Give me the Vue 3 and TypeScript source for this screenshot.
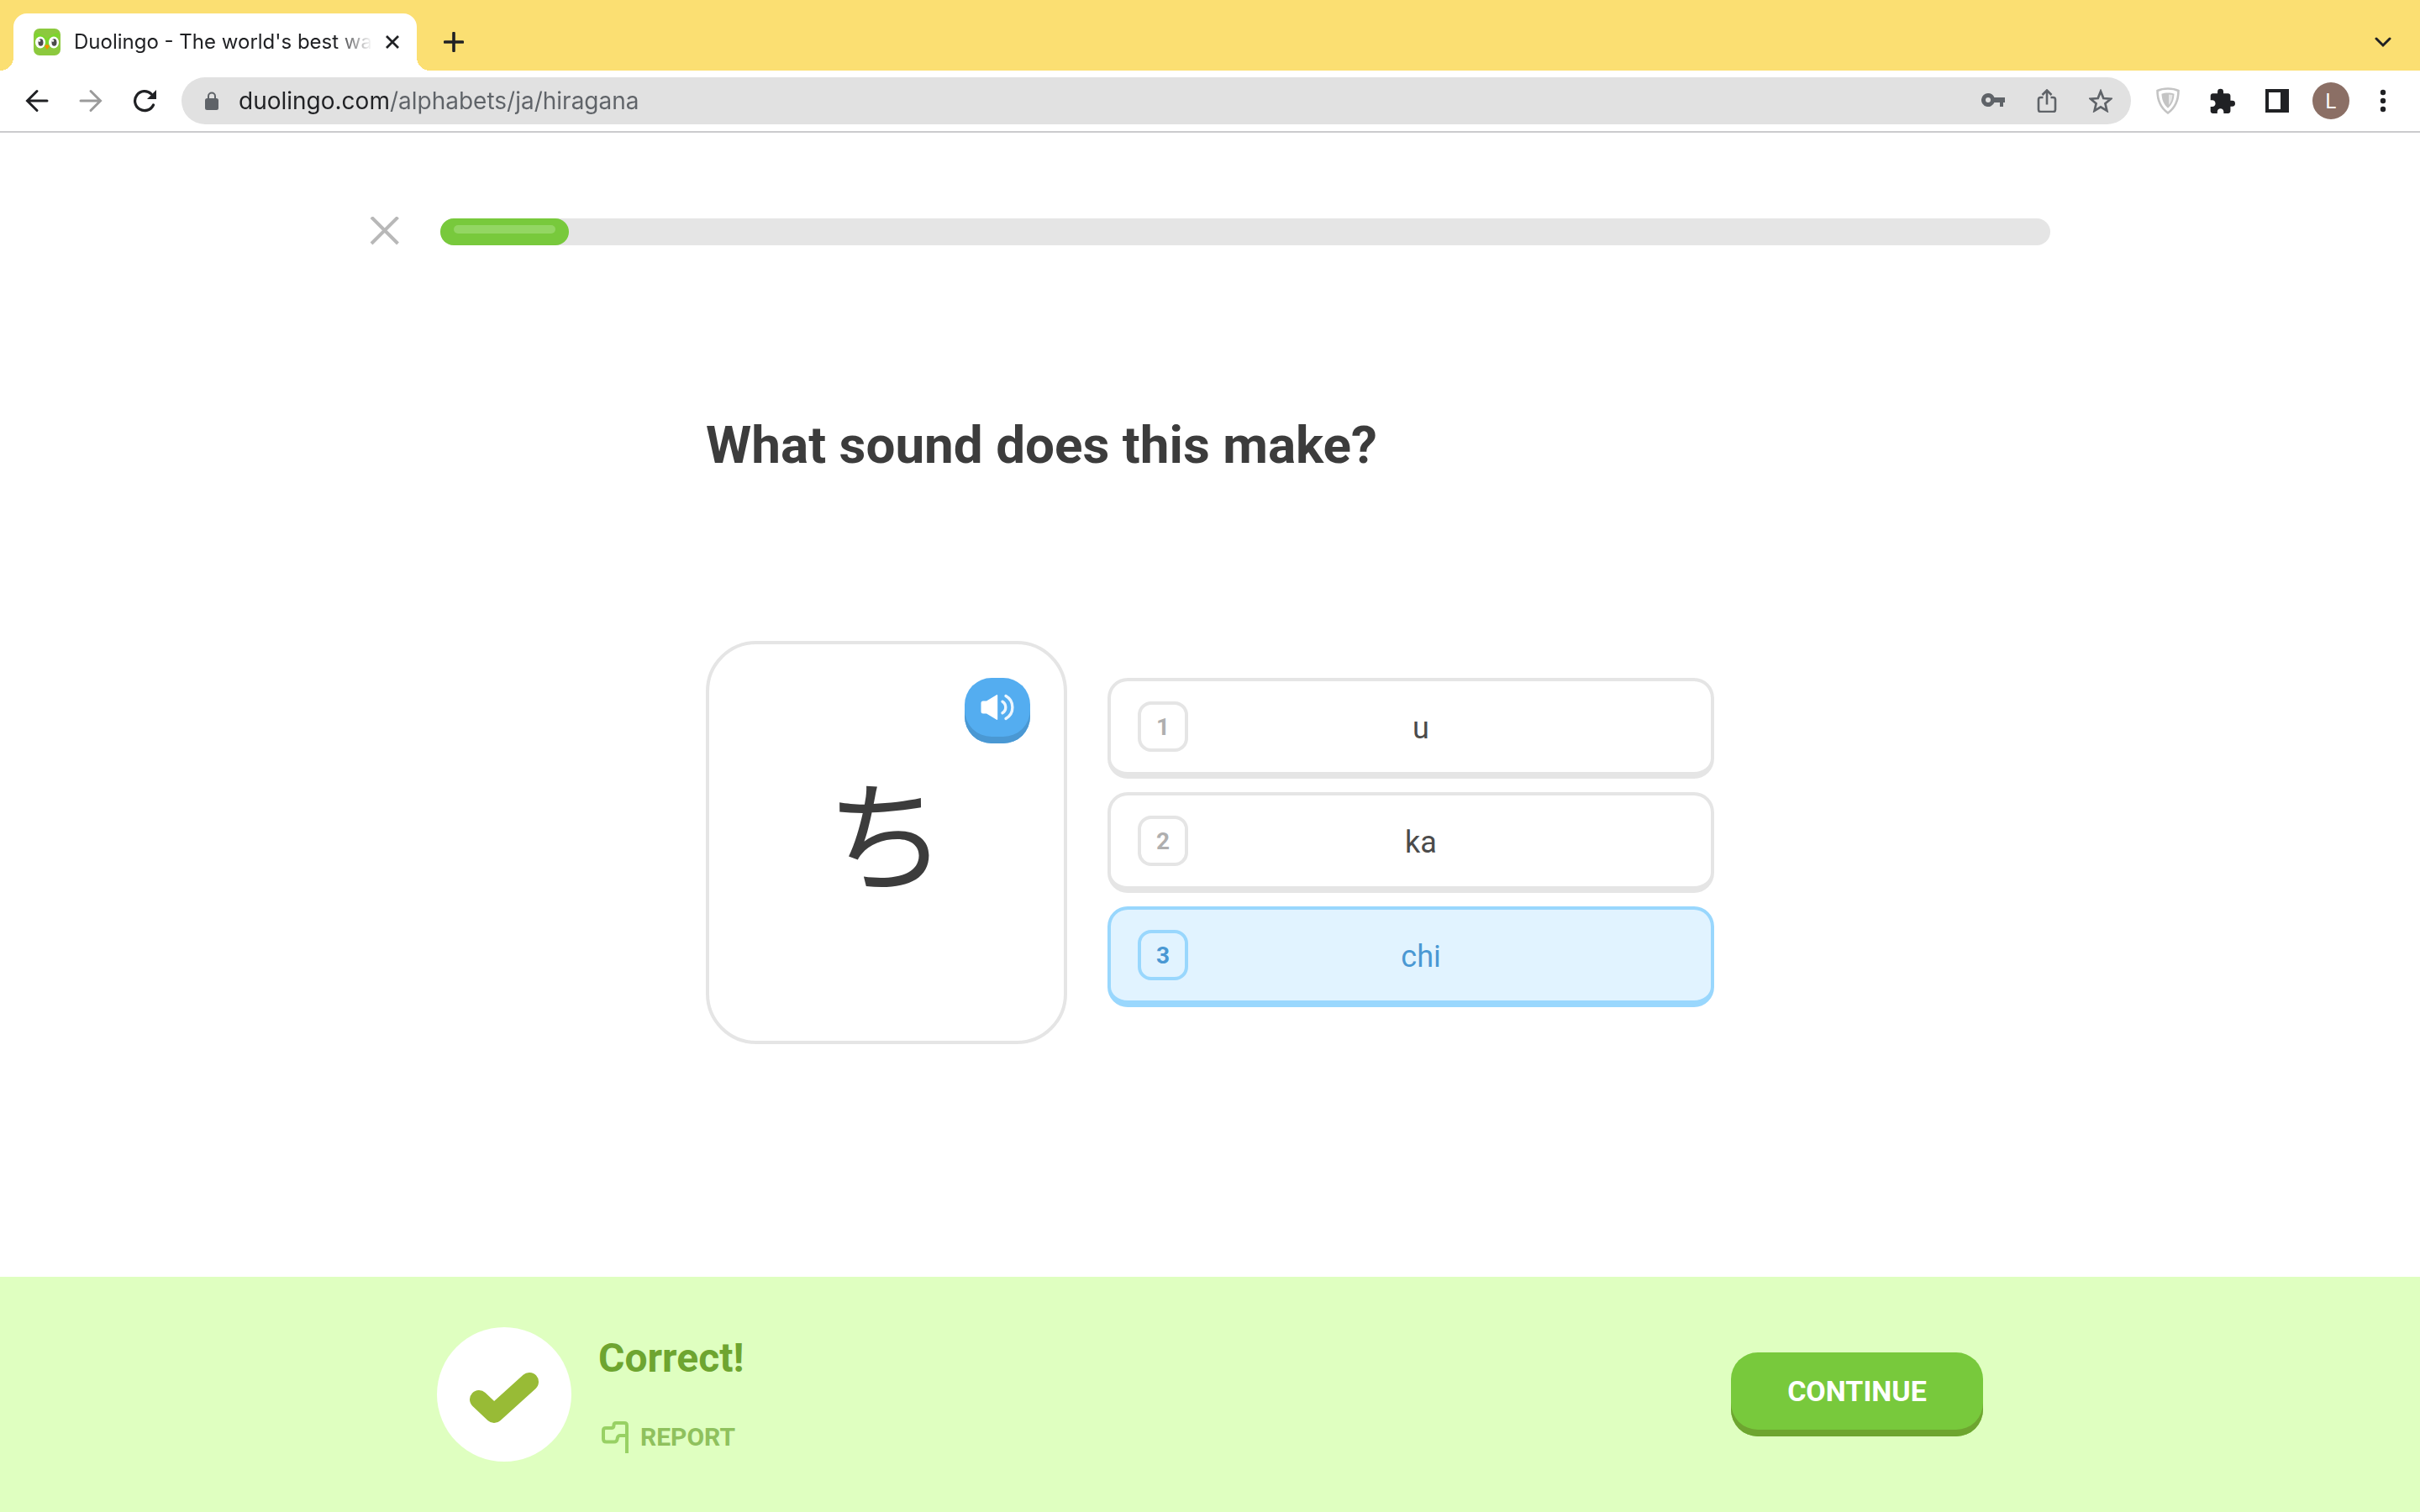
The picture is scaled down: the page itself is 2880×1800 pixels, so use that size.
<script setup lang="ts">
import { ref } from 'vue'

interface Choice {
  key: number
  sound: string
}

const choices: Choice[] = [
  { key: 1, sound: 'u' },
  { key: 2, sound: 'ka' },
  { key: 3, sound: 'chi' },
]
const selected = ref<number>(3)
const progress = ref<number>(8)
const address = ref<string>('duolingo.com/alphabets/ja/hiragana')
</script>

<template>
  <div class="page">
    <header class="browser">
      <div class="tab-strip">
        <div class="tab">
          <svg class="favicon" viewBox="0 0 32 32" aria-hidden="true">
            <rect width="32" height="32" rx="7" fill="#8cc93e" />
            <path d="M2 5c2 0 9 2 14 7 5-5 12-7 14-7l-1 8v9c-3 3-10 1-13-1-3 2-10 4-13 1v-9z" fill="#7bd62b" />
            <ellipse cx="8" cy="16.500" rx="6" ry="7" fill="#fff" />
            <ellipse cx="24" cy="16.500" rx="6" ry="7" fill="#fff" />
            <ellipse cx="8.500" cy="16.500" rx="3" ry="4.300" fill="#4b4b4b" />
            <ellipse cx="24.500" cy="16.500" rx="3" ry="4.300" fill="#4b4b4b" />
            <circle cx="7" cy="14.500" r="1.200" fill="#fff" />
            <circle cx="23" cy="14.500" r="1.200" fill="#fff" />
            <path d="M13 21q3-4 6 0l-3 4z" fill="#f49000" />
          </svg>
          <span class="tab-title">Duolingo - The world's best wa</span>
          <button class="icon-button" type="button" aria-label="Close tab">
            <svg width="16" height="16" viewBox="0 0 16 16"><path d="M1 1l14 14M15 1L1 15" fill="none" stroke="#202124" stroke-width="2.800" /></svg>
          </button>
        </div>
        <button class="icon-button new-tab" type="button" aria-label="New tab">
          <svg width="24" height="24" viewBox="0 0 24 24"><path d="M12 1.500v21M1.500 12h21" fill="none" stroke="#202124" stroke-width="3.600" stroke-linecap="round" /></svg>
        </button>
        <button class="icon-button tab-search" type="button" aria-label="Search tabs">
          <svg width="20" height="14" viewBox="0 0 20 14"><path d="M2 3l8 8 8-8" fill="none" stroke="#202124" stroke-width="3" stroke-linecap="round" /></svg>
        </button>
      </div>

      <div class="toolbar">
        <nav class="history" aria-label="History">
          <button class="icon-button" type="button" aria-label="Back">
            <svg width="28" height="28" viewBox="0 0 28 28"><path d="M26 14H3M14 2.500L2.500 14 14 25.500" fill="none" stroke="#202124" stroke-width="3" stroke-linecap="round" /></svg>
          </button>
          <button class="icon-button" type="button" aria-label="Forward">
            <svg width="28" height="28" viewBox="0 0 28 28"><path d="M2 14h23M14 2.500L25.500 14 14 25.500" fill="none" stroke="#9b9b9b" stroke-width="3" stroke-linecap="round" /></svg>
          </button>
          <button class="icon-button" type="button" aria-label="Reload">
            <svg width="28" height="28" viewBox="0 0 28 28">
              <path d="M22 5.800A11.500 11.500 0 1 0 24.500 19" fill="none" stroke="#202124" stroke-width="3.200" stroke-linecap="round" />
              <path d="M28 1v11H17z" fill="#202124" />
            </svg>
          </button>
        </nav>

        <div class="omnibox">
          <svg class="lock" width="16" height="22" viewBox="0 0 16 22" aria-hidden="true">
            <rect y="8" width="16" height="14" rx="2.500" fill="#5f6368" />
            <path d="M4 9V5.500a4 4 0 0 1 8 0V9" fill="none" stroke="#5f6368" stroke-width="2" />
          </svg>
          <input v-model="address" class="address" type="text" aria-label="Address" />
          <button class="icon-button" type="button" aria-label="Passwords">
            <svg width="28" height="28" viewBox="0 0 28 28">
              <path fill="#5f6368" fill-rule="evenodd" d="M8 5a8 8 0 1 0 7.400 11H22v5h4v-5h2v-6H15.400A8 8 0 0 0 8 5zm0 5a3 3 0 1 1 0 6 3 3 0 0 1 0-6z" />
            </svg>
          </button>
          <button class="icon-button" type="button" aria-label="Share">
            <svg width="28" height="28" viewBox="0 0 28 28">
              <path d="M9.500 10H6.500a2.500 2.500 0 0 0-2.500 2.500v12a2.500 2.500 0 0 0 2.500 2.500h15a2.500 2.500 0 0 0 2.500-2.500v-12a2.500 2.500 0 0 0-2.500-2.500h-3M14 18.500V2M8.500 7L14 1.500 19.500 7" fill="none" stroke="#5f6368" stroke-width="2.600" />
            </svg>
          </button>
          <button class="icon-button" type="button" aria-label="Bookmark this tab">
            <svg width="28" height="28" viewBox="0 0 28 28">
              <path d="M14 2.800l3.300 8.200 8.700.7-6.600 5.600 2 8.500-7.400-4.500-7.400 4.500 2-8.500L2 11.700l8.700-.7z" fill="none" stroke="#5f6368" stroke-width="2.700" />
            </svg>
          </button>
        </div>

        <div class="extensions">
          <button class="icon-button" type="button" aria-label="Shield extension">
            <svg width="28" height="32" viewBox="0 0 28 32">
              <path d="M14 1.500c5 0 9 .8 12.500 2.500 0 11-3.500 20-12.500 26.500C5 24 1.500 15 1.500 4 5 2.300 9 1.500 14 1.500z" fill="none" stroke="#c4c4c4" stroke-width="2.600" />
              <path d="M14 6.500c3 0 5.500.4 7.500 1.200-.2 7-2.500 12.800-7.500 17C9 20.500 6.700 14.700 6.500 7.700 8.500 6.900 11 6.500 14 6.500z" fill="#c4c4c4" />
              <path d="M15 8.500c1.800 0 3.200.2 4.500.6-.4 5-1.700 9-4.500 12z" fill="#e9e9e9" />
            </svg>
          </button>
          <button class="icon-button" type="button" aria-label="Extensions">
            <svg width="30" height="30" viewBox="1.500 0.500 21.500 21.500">
              <path fill="#202124" d="M20.500 11H19V7c0-1.100-.9-2-2-2h-4V3.500a2.500 2.500 0 0 0-5 0V5H4c-1.100 0-1.990.9-1.990 2v3.800H3.500c1.490 0 2.700 1.210 2.700 2.700s-1.210 2.700-2.700 2.700H2V20c0 1.100.9 2 2 2h3.800v-1.500c0-1.490 1.210-2.700 2.700-2.700 1.490 0 2.700 1.210 2.700 2.700V22H17c1.100 0 2-.9 2-2v-4h1.500a2.500 2.500 0 0 0 0-5z" />
            </svg>
          </button>
          <button class="icon-button" type="button" aria-label="Side panel">
            <svg width="28" height="28" viewBox="0 0 28 28"><path fill="#202124" fill-rule="evenodd" d="M0 0h28v28H0zM4 4v20h14V4z" /></svg>
          </button>
          <button class="avatar" type="button" aria-label="Profile L">L</button>
          <button class="icon-button" type="button" aria-label="Menu">
            <svg width="8" height="28" viewBox="0 0 8 28" fill="#202124"><circle cx="4" cy="4" r="3.200" /><circle cx="4" cy="14" r="3.200" /><circle cx="4" cy="24" r="3.200" /></svg>
          </button>
        </div>
      </div>
    </header>

    <main class="lesson">
      <div class="lesson-top">
        <button class="icon-button" type="button" aria-label="Quit lesson">
          <svg width="36" height="36" viewBox="0 0 36 36"><path d="M2 .500l31.500 31.500M33.500.500L2 32" fill="none" stroke="#b8b8b8" stroke-width="4" /></svg>
        </button>
        <div class="track" role="progressbar" :aria-valuenow="progress" aria-valuemin="0" aria-valuemax="100" aria-label="Lesson progress">
          <div class="fill" :style="{ width: progress + '%' }"><div class="shine"></div></div>
        </div>
      </div>

      <section class="challenge">
        <h1>What sound does this make?</h1>
        <div class="exercise">
          <div class="card">
            <span class="kana" lang="ja">ち</span>
            <button class="speaker" type="button" aria-label="Play sound">
              <svg width="40" height="32" viewBox="0 0 40 32">
                <path d="M3 8.500h4L19 1.200q1.200-.5 1.200.8v28q0 1.300-1.200.8L7 23.500H3Q.500 23.500.500 21V11Q.500 8.500 3 8.500z" fill="#fff" />
                <path d="M26 9.200a8 8 0 0 1 0 13.600M30 2.500a15.500 15.500 0 0 1 0 27" fill="none" stroke="#ecf6fe" stroke-width="3.400" stroke-linecap="round" />
              </svg>
            </button>
          </div>
          <div class="choices" role="radiogroup" aria-label="Answers">
            <label v-for="choice in choices" :key="choice.key" class="choice" :class="{ chosen: selected === choice.key }">
              <input v-model="selected" class="choice-input" type="radio" name="answer" :value="choice.key" />
              <span class="choice-key">{{ choice.key }}</span>
              <span class="choice-sound">{{ choice.sound }}</span>
            </label>
          </div>
        </div>
      </section>
    </main>

    <footer class="result">
      <div class="result-inner">
        <div class="badge">
          <svg width="82" height="60" viewBox="0 0 82 60" aria-hidden="true"><path d="M11 32l18 17 42-38" fill="none" stroke="#98bb36" stroke-width="22" stroke-linecap="round" stroke-linejoin="round" /></svg>
        </div>
        <div class="verdict">
          <h2>Correct!</h2>
          <button class="report" type="button">
            <svg width="32" height="38" viewBox="0 0 32 38" aria-hidden="true">
              <path d="M30 38V5q0-3-3-3H17q-2.500 0-2.500 2.500V5q0 3-3 3H5Q2 8 2 11v10q0 3.500 3.500 3.500H15q3 0 3.500-3l.3-1.500q.7-3 3.200-3h8" fill="none" stroke="#98d164" stroke-width="4" />
            </svg>
            REPORT
          </button>
        </div>
        <button class="continue" type="button">CONTINUE</button>
      </div>
    </footer>
  </div>
</template>

<style>
body {
  margin: 0;
  background: #fff;
}
</style>

<style scoped>
.page {
  display: flex;
  flex-direction: column;
  min-height: 100vh;
  font-family: Roboto, "Liberation Sans", sans-serif;
  color: #3c3c3c;
}
.page * {
  box-sizing: border-box;
}
button {
  margin: 0;
  padding: 0;
  border: 0;
  background: none;
  font: inherit;
  color: inherit;
  cursor: pointer;
}
svg {
  display: block;
  flex: none;
}
.icon-button {
  display: flex;
  flex: none;
}
.browser {
  font-family: Inter, "Liberation Sans", sans-serif;
  color: #202124;
}

/* Tab strip */
.tab-strip {
  display: flex;
  align-items: center;
  height: 84px;
  padding: 16px 34px 0 16px;
  background: #fbdf72;
}
.tab {
  position: relative;
  display: flex;
  align-items: center;
  gap: 16px;
  width: 480px;
  height: 68px;
  padding: 0 24px;
  border-radius: 16px 16px 0 0;
  background: #fff;
}
.tab::before,
.tab::after {
  content: "";
  position: absolute;
  bottom: 0;
  width: 16px;
  height: 16px;
}
.tab::before {
  right: 100%;
  background: radial-gradient(circle at 0 0, transparent 16px, #fff 16px);
}
.tab::after {
  left: 100%;
  background: radial-gradient(circle at 100% 0, transparent 16px, #fff 16px);
}
.favicon {
  width: 32px;
  height: 32px;
}
.tab-title {
  flex: 1;
  font-size: 24px;
  line-height: 32px;
  white-space: nowrap;
  mask-image: linear-gradient(90deg, #000 calc(100% - 44px), transparent);
}
.new-tab {
  margin-left: 32px;
}
.tab-search {
  margin-left: auto;
}

/* Toolbar */
.toolbar {
  display: flex;
  align-items: center;
  height: 74px;
  padding: 0 40px 0 30px;
  border-bottom: 2px solid #cbcbcd;
}
.history {
  display: flex;
  gap: 36px;
  margin-right: 30px;
}
.omnibox {
  display: flex;
  flex: 1;
  align-items: center;
  gap: 36px;
  height: 56px;
  padding: 0 22px 0 28px;
  border-radius: 28px;
  background: #e1e1e1;
}
.lock {
  margin-right: -12px;
}
.address {
  flex: 1;
  min-width: 0;
  height: 40px;
  padding: 0;
  border: 0;
  outline: 0;
  font: inherit;
  font-size: 28px;
  color: transparent;
  background: linear-gradient(90deg, #202124 180px, #5f6368 180px);
  background-clip: text;
}
.extensions {
  display: flex;
  align-items: center;
  gap: 36px;
  margin-left: 30px;
}
.avatar {
  width: 44px;
  height: 44px;
  margin-left: -8px;
  border-radius: 50%;
  background: #8b6f65;
  color: #fff;
  font-size: 24px;
}

/* Lesson */
.lesson {
  flex: 1;
  padding: 100px 40px 48px;
}
.lesson-top {
  display: flex;
  align-items: center;
  gap: 48px;
  max-width: 2000px;
  margin: 0 auto;
}
.track {
  flex: 1;
  height: 32px;
  border-radius: 16px;
  background: #e5e5e5;
}
.fill {
  height: 32px;
  padding: 8px 16px;
  border-radius: 16px;
  background: #78c93c;
}
.shine {
  height: 10px;
  border-radius: 5px;
  background: #93d663;
}
.challenge {
  max-width: 1200px;
  margin: 198px auto 0;
}
h1 {
  margin: 0 0 195px;
  font-size: 62px;
  line-height: 76px;
  font-weight: 700;
}
.exercise {
  display: flex;
  align-items: center;
  gap: 48px;
}
.card {
  display: grid;
  flex: none;
  width: 430px;
  height: 480px;
  padding: 40px;
  border: 4px solid #e5e5e5;
  border-radius: 60px;
}
.kana,
.speaker {
  grid-area: 1 / 1;
}
.kana {
  place-self: center;
  padding-bottom: 32px;
  font-family: "Noto Sans CJK JP", sans-serif;
  font-size: 144px;
  line-height: 200px;
}
.speaker {
  display: flex;
  place-self: start end;
  justify-content: center;
  width: 78px;
  height: 78px;
  padding-top: 19px;
  border-radius: 32px;
  background: #54adf0;
  box-shadow: inset 0 -8px #4a98d3;
}
.choices {
  display: flex;
  flex: 1;
  flex-direction: column;
  gap: 16px;
}
.choice {
  position: relative;
  display: flex;
  align-items: center;
  padding: 24px 32px;
  border: 4px solid #e5e5e5;
  border-bottom-width: 8px;
  border-radius: 24px;
  font-size: 36px;
  color: #4b4b4b;
  cursor: pointer;
}
.choice-input {
  position: absolute;
  inset: 0;
  margin: 0;
  opacity: 0;
}
.choice-key {
  display: flex;
  align-items: center;
  justify-content: center;
  width: 60px;
  height: 60px;
  border: 4px solid #e5e5e5;
  border-radius: 16px;
  font-size: 28px;
  font-weight: 700;
  color: #afafaf;
}
.choice-sound {
  flex: 1;
  padding: 4px 36px 0 0;
  text-align: center;
}
.choice.chosen {
  border-color: #99d7fd;
  background: #e1f3ff;
  color: #4a98d3;
}
.chosen .choice-key {
  border-color: #99d7fd;
  color: #4a98d3;
}

/* Result bar */
.result {
  padding: 60px 40px;
  background: #dfffc0;
}
.result-inner {
  display: flex;
  align-items: center;
  max-width: 1840px;
  margin: 0 auto;
}
.badge {
  display: flex;
  align-items: center;
  justify-content: center;
  width: 160px;
  height: 160px;
  padding-top: 8px;
  border-radius: 50%;
  background: #fff;
}
.verdict {
  display: flex;
  flex: 1;
  flex-direction: column;
  align-items: flex-start;
  gap: 46px;
  margin-left: 32px;
}
h2 {
  margin: 0;
  font-size: 48px;
  line-height: 56px;
  font-weight: 700;
  color: #6ea530;
}
.report {
  display: flex;
  align-items: center;
  gap: 14px;
  margin-left: 4px;
  font-size: 30px;
  line-height: 40px;
  font-weight: 700;
  color: #8fc15d;
}
.continue {
  width: 300px;
  height: 100px;
  padding-bottom: 8px;
  border-radius: 32px;
  background: #78c93c;
  box-shadow: inset 0 -8px #6ea530;
  font-size: 34px;
  font-weight: 700;
  color: #fff;
}
</style>
